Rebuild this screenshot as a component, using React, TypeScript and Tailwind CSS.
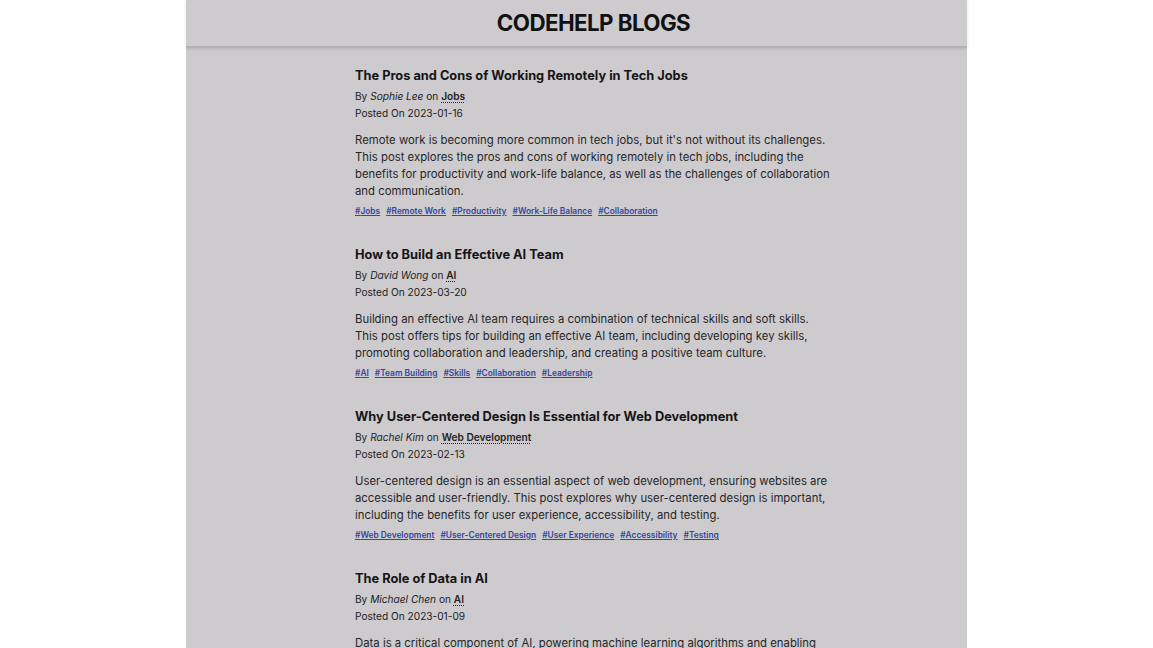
const posts = [
  {
    title: "The Pros and Cons of Working Remotely in Tech Jobs",
    author: "Sophie Lee",
    category: "Jobs",
    date: "2023-01-16",
    content:
      "Remote work is becoming more common in tech jobs, but it's not without its challenges. This post explores the pros and cons of working remotely in tech jobs, including the benefits for productivity and work-life balance, as well as the challenges of collaboration and communication.",
    tags: ["Jobs", "Remote Work", "Productivity", "Work-Life Balance", "Collaboration"],
  },
  {
    title: "How to Build an Effective AI Team",
    author: "David Wong",
    category: "AI",
    date: "2023-03-20",
    content:
      "Building an effective AI team requires a combination of technical skills and soft skills. This post offers tips for building an effective AI team, including developing key skills, promoting collaboration and leadership, and creating a positive team culture.",
    tags: ["AI", "Team Building", "Skills", "Collaboration", "Leadership"],
  },
  {
    title: "Why User-Centered Design Is Essential for Web Development",
    author: "Rachel Kim",
    category: "Web Development",
    date: "2023-02-13",
    content:
      "User-centered design is an essential aspect of web development, ensuring websites are accessible and user-friendly. This post explores why user-centered design is important, including the benefits for user experience, accessibility, and testing.",
    tags: ["Web Development", "User-Centered Design", "User Experience", "Accessibility", "Testing"],
  },
  {
    title: "The Role of Data in AI",
    author: "Michael Chen",
    category: "AI",
    date: "2023-01-09",
    content:
      "Data is a critical component of AI, powering machine learning algorithms and enabling intelligent systems to learn and improve. This post explores the role of data in AI, including data collection, cleaning, and analysis.",
    tags: ["AI", "Data", "Machine Learning"],
  },
];

function Header() {
  return (
    <header className="flex h-[48px] w-full items-center justify-center border-b-2 border-[#b3b1b4] pl-[34px] shadow-[0_1px_3px_rgba(0,0,0,0.12)]">
      <h1 className="text-[22.3px] font-bold tracking-tight text-[#111]">CODEHELP BLOGS</h1>
    </header>
  );
}

function Post({ post }: { post: (typeof posts)[number] }) {
  return (
    <div className="flex flex-col">
      <p className="text-[12.8px] leading-[18px] font-bold text-[#151515]">{post.title}</p>
      <p className="mt-[3px] text-[10.15px] leading-[17px] text-[#222]">
        By <span className="italic">{post.author}</span> on{" "}
        <span className="font-semibold underline decoration-dotted underline-offset-2">{post.category}</span>
      </p>
      <p className="text-[10.15px] leading-[17px] text-[#222]">Posted On {post.date}</p>
      <p className="mt-[10px] text-[11.35px] leading-[17px] text-[#262626]">{post.content}</p>
      <div className="mt-[4px] flex gap-x-[6px] text-[8.4px] leading-[14px] font-semibold text-[#3446a0]">
        {post.tags.map((t, i) => (
          <span key={i} className="underline underline-offset-1">#{t}</span>
        ))}
      </div>
    </div>
  );
}

export default function App() {
  return (
    <div className="flex h-[648px] w-full justify-center overflow-hidden bg-white" style={{ fontFamily: "Inter, 'Noto Sans', sans-serif" }}>
      <div className="h-full w-[781px] bg-[#cdcbce]">
        <Header />
        <div className="flex w-[647px] flex-col gap-[28px] pl-[169px] pt-[19px]">
          {posts.map((p, i) => (
            <Post key={i} post={p} />
          ))}
        </div>
      </div>
    </div>
  );
}
